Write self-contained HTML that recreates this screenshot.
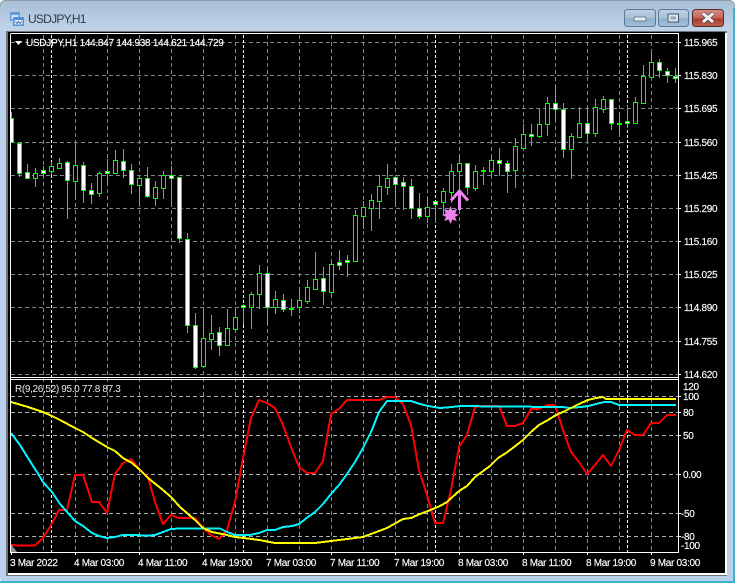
<!DOCTYPE html>
<html><head><meta charset="utf-8"><title>USDJPY,H1</title>
<style>
html,body{margin:0;padding:0;width:736px;height:583px;overflow:hidden;background:#fff}
svg{display:block}
text{font-family:"Liberation Sans",sans-serif;font-size:10px;fill:#fff;stroke:#fff;stroke-width:.15px;letter-spacing:-.3px}
</style></head><body>
<svg width="736" height="583" viewBox="0 0 736 583" xmlns="http://www.w3.org/2000/svg">
<defs>
<linearGradient id="tb" x1="0" y1="0" x2="0" y2="1"><stop offset="0" stop-color="#a9bfd5"/><stop offset="1" stop-color="#c0d5ea"/></linearGradient>
<linearGradient id="bt" x1="0" y1="0" x2="0" y2="1"><stop offset="0" stop-color="#bcd0e4"/><stop offset=".5" stop-color="#a9c2da"/><stop offset=".55" stop-color="#8fafcd"/><stop offset="1" stop-color="#a3c0da"/></linearGradient>
<linearGradient id="cl" x1="0" y1="0" x2="0" y2="1"><stop offset="0" stop-color="#d58f85"/><stop offset=".5" stop-color="#c2655a"/><stop offset=".55" stop-color="#aa3a2d"/><stop offset="1" stop-color="#bd6558"/></linearGradient>
</defs>
<!-- window chrome -->
<rect x="0" y="0" width="735" height="583" rx="6" fill="#b9d1ea"/>
<rect x="0" y="0" width="735" height="32" rx="6" fill="url(#tb)"/>
<path d="M0 7Q0 .5 6 .5H729Q734.5 .5 734.5 7" fill="none" stroke="#8d9dab"/>
<rect x="733" y="8" width="2" height="575" fill="#3fb4c9"/>
<rect x="0" y="581" width="735" height="2" fill="#3fb4c9"/>
<rect x="6" y="31" width="721" height="545" fill="#6e7479"/>
<rect x="8" y="32" width="717" height="541" fill="#000"/>
<rect x="8" y="573" width="719" height="2" fill="#fff"/>
<rect x="725" y="33" width="2" height="542" fill="#fff"/>
<!-- app icon -->
<rect x="10" y="12" width="10" height="9" rx="1" fill="#5f9ade"/><rect x="11.5" y="15" width="7" height="4.5" fill="#dbe9f8"/>
<rect x="13" y="17" width="11" height="9" rx="1" fill="#4f8fd8"/><rect x="14.5" y="20" width="8" height="4.5" fill="#e6f0fb"/>
<path d="M15.5 21.5l1.5 2 1.5-2 1.5 2 1.5-2" fill="none" stroke="#3a74bb"/>
<text x="28" y="23" style="font-size:12px;fill:#2d3a46;stroke:none;letter-spacing:-.75px">USDJPY,H1</text>
<!-- window buttons -->
<rect x="624.5" y="9.5" width="31" height="17" rx="3" fill="url(#bt)" stroke="#5e7a95"/>
<rect x="634" y="17" width="12" height="4" rx="1" fill="#e9eef2" stroke="#4f6273" stroke-width=".8"/>
<rect x="658.5" y="9.5" width="30" height="17" rx="3" fill="url(#bt)" stroke="#5e7a95"/>
<rect x="668" y="14" width="10.500" height="8" fill="#dfe6ec" stroke="#45586a"/><rect x="670.500" y="16.500" width="5.500" height="3" fill="#8fa8bf"/>
<rect x="692.5" y="9.5" width="31" height="17" rx="3" fill="url(#cl)" stroke="#5a2a28"/>
<path d="M703 13.500L713 22M713 13.500L703 22" stroke="#4b4b4b" stroke-width="4.500"/>
<path d="M703 13.500L713 22M713 13.500L703 22" stroke="#f4f4f4" stroke-width="3"/>
<!-- vertical grid -->
<path d="M43.5 35V552M75.5 35V552M107.500 35V552M139.500 35V552M171.500 35V552M203.500 35V552M235.500 35V552M267.500 35V552M299.500 35V552M331.500 35V552M363.500 35V552M395.500 35V552M427.500 35V552M459.500 35V552M491.500 35V552M523.500 35V552M555.500 35V552M587.500 35V552M619.500 35V552M651.500 35V552" stroke="#778899" stroke-dasharray="4 3" fill="none"/>
<!-- horizontal grid -->
<path d="M11 42.500H678M11 75.500H678M11 108.500H678M11 142.500H678M11 175.500H678M11 208.500H678M11 241.500H678M11 274.500H678M11 307.500H678M11 341.500H678M11 374.500H678" stroke="#778899" stroke-dasharray="4 3" fill="none"/>
<path d="M11 396.500H678M11 412.500H678M11 435.500H678M11 474.500H678M11 513.500H678M11 536.500H678" stroke="#a9b0b8" stroke-dasharray="4 3" fill="none"/>
<!-- day separators -->
<path d="M51.500 35V552M243.500 35V552M435.500 35V552M627.500 35V552" stroke="#fff" stroke-dasharray="3 2" fill="none"/>
<!-- wicks -->
<path shape-rendering="crispEdges" fill="none" stroke="#00ff00" d="M11.500 112V143M19.500 143V177M27.500 164V179M35.500 168V187M43.500 166V176M51.500 162V175M59.500 158V169M67.500 161V219M75.500 143V199M83.500 162V203M91.500 183V204M99.500 172V197M107.500 159V182M115.500 150V174M123.500 149V178M131.500 164V194M139.500 177V205M147.500 167V198M155.500 181V206M163.500 171V199M171.500 166V207M179.500 177V243M187.500 233V333M195.500 313V369M203.500 307V368M211.500 315V350M219.500 327V356M227.500 309V345M235.500 310V331M243.500 304V325M251.500 292V329M259.500 265V309M267.500 269V325M275.500 291V314M283.500 294V312M291.500 299V316M299.500 287V313M307.500 280V304M315.500 252V289M323.500 267V305M331.500 261V296M339.500 250V270M347.500 255V277M355.500 210V261M363.500 201V229M371.500 194V231M379.500 175V219M387.500 164V195M395.500 177V207M403.500 177V210M411.500 179V219M419.500 193V219M427.500 198V223M435.500 201V223M443.500 188V215M451.500 164V203M459.500 154V190M467.500 163V195M475.500 165V191M483.500 167V185M491.500 157V177M499.500 148V176M507.500 161V193M515.500 138V188M523.500 124V148M531.500 124V146M539.500 108V138M547.500 97V136M555.500 86V121M563.500 103V158M571.500 133V179M579.500 107V137M587.500 107V141M595.500 99V137M603.500 96V113M611.500 99V130M619.500 112V133M627.500 105V128M635.500 97V123M643.500 65V103M651.500 52V77M659.500 59V78M667.500 68V83M675.500 68V83"/>
<!-- white bodies -->
<path shape-rendering="crispEdges" fill="#fff" stroke="#00ff00" d="M17.500 143.500h4V173.500h-4zM25.500 172.500h4V178.500h-4zM41.500 170.500h4V173.500h-4zM65.500 162.500h4V180.500h-4zM81.500 165.500h4V190.500h-4zM89.500 190.500h4V194.500h-4zM105.500 171.500h4V173.500h-4zM121.500 161.500h4V170.500h-4zM129.500 170.500h4V184.500h-4zM145.500 178.500h4V196.500h-4zM169.500 175.500h4V178.500h-4zM177.500 177.500h4V238.500h-4zM185.500 239.500h4V325.500h-4zM193.500 325.500h4V367.500h-4zM217.500 332.500h4V345.500h-4zM241.500 305.500h4V307.500h-4zM265.500 273.500h4V307.500h-4zM281.500 300.500h4V309.500h-4zM289.500 308.500h4V309.500h-4zM321.500 278.500h4V291.500h-4zM337.500 262.500h4V265.500h-4zM345.500 260.500h4V262.500h-4zM393.500 177.500h4V184.500h-4zM401.500 182.500h4V186.500h-4zM409.500 186.500h4V208.500h-4zM417.500 208.500h4V216.500h-4zM433.500 201.500h4V204.500h-4zM465.500 163.500h4V187.500h-4zM481.500 170.500h4V171.500h-4zM497.500 160.500h4V163.500h-4zM505.500 163.500h4V171.500h-4zM529.500 134.500h4V136.500h-4zM553.500 103.500h4V109.500h-4zM561.500 109.500h4V149.500h-4zM585.500 123.500h4V133.500h-4zM609.500 99.500h4V123.500h-4zM617.500 123.500h4V124.500h-4zM625.500 121.500h4V123.500h-4zM657.500 62.500h4V70.500h-4zM665.500 71.500h4V75.500h-4zM673.500 76.500h4V78.500h-4z"/>
<path shape-rendering="crispEdges" fill="#fff" stroke="#00ff00" d="M11 118.500H13.500V142.500H11"/>
<!-- hollow bodies -->
<path shape-rendering="crispEdges" fill="#000" stroke="#00ff00" d="M33.500 173.500h4V178.500h-4zM49.500 166.500h4V171.500h-4zM57.500 163.500h4V168.500h-4zM73.500 165.500h4V181.500h-4zM97.500 173.500h4V193.500h-4zM113.500 160.500h4V173.500h-4zM137.500 178.500h4V185.500h-4zM153.500 187.500h4V198.500h-4zM161.500 175.500h4V188.500h-4zM201.500 338.500h4V366.500h-4zM209.500 333.500h4V339.500h-4zM225.500 328.500h4V345.500h-4zM233.500 317.500h4V329.500h-4zM249.500 294.500h4V307.500h-4zM257.500 273.500h4V294.500h-4zM273.500 299.500h4V307.500h-4zM297.500 300.500h4V307.500h-4zM305.500 287.500h4V301.500h-4zM313.500 279.500h4V289.500h-4zM329.500 264.500h4V292.500h-4zM353.500 215.500h4V261.500h-4zM361.500 207.500h4V216.500h-4zM369.500 200.500h4V208.500h-4zM377.500 186.500h4V201.500h-4zM385.500 178.500h4V187.500h-4zM425.500 207.500h4V216.500h-4zM441.500 191.500h4V202.500h-4zM449.500 171.500h4V192.500h-4zM457.500 163.500h4V171.500h-4zM473.500 171.500h4V188.500h-4zM489.500 160.500h4V171.500h-4zM513.500 146.500h4V170.500h-4zM521.500 134.500h4V148.500h-4zM537.500 124.500h4V136.500h-4zM545.500 103.500h4V124.500h-4zM569.500 136.500h4V149.500h-4zM577.500 123.500h4V137.500h-4zM593.500 107.500h4V133.500h-4zM601.500 99.500h4V109.500h-4zM633.500 102.500h4V123.500h-4zM641.500 76.500h4V103.500h-4zM649.500 62.500h4V77.500h-4z"/>
<!-- arrow and star -->
<path d="M459.500 210V191M451 200.500L459.500 191L468 200.500" fill="none" stroke="#ee82ee" stroke-width="3"/>
<path d="M450.500 206l1.800 4.400 4.700-1.400-1.800 4.500 3.800 1.500-4 1.700 1.800 4.300-4.500-1.500-1.800 4.500-1.800-4.500-4.500 1.500 1.800-4.300-4-1.700 3.800-1.500-1.800-4.500 4.700 1.400z" fill="#ee82ee"/>
<!-- indicator lines -->
<polyline shape-rendering="crispEdges" fill="none" stroke="#ff0000" stroke-width="2" stroke-linejoin="round" points="11,545 19,545.500 35,545.500 43,538 50,527 59,510 67,510 75,475 83,475 92,502 99,502 107,513 115,474 123,463 131,459 140,470 148,477 155,502 163,524 171,515 179,518 195,518 203,528 211,535 219,539 227,530 235,502 243,458 251,418 259,400 267,403 275,408 283,425 291,447 299,467 307,473 315,473 323,461 331,414 339,409 347,400 379,400 387,397 395,397 403,404 411,425 419,470 427,495 435,523 443,523 451,490 459,447 467,435 475,407 483,406 499,406 507,426 515,426 523,423 531,409 539,409 547,405 555,405 563,430 571,452 579,462 587,474 595,465 603,455 611,466 619,450 627,430 635,435 643,435 651,423 659,423 667,415 676,415"/>
<polyline shape-rendering="crispEdges" fill="none" stroke="#00f6ff" stroke-width="2" stroke-linejoin="round" points="11,433 20,445 28,458 37,472 43,482 52,492 60,504 68,513 75,521 83,526 92,533 99,536 107,538 115,537 123,535 132,535 148,535.500 155,535 163,532 171,529 180,528.500 220,528.500 227,532 235,535 250,535 259,533 267,530 275,530 283,527 292,526 299,524 308,517 315,512 323,504 331,494 339,485 347,474 355,462 363,448 371,432 379,412 387,401 411,401 420,404 428,406 440,408 452,407 460,406 499,406.500 563,407 569,408 581,407 588,406 596,404 604,402 611,402 619,405 676,405"/>
<polyline shape-rendering="crispEdges" fill="none" stroke="#ffff00" stroke-width="2" stroke-linejoin="round" points="11,402 28,407 43,412 52,416 60,420 75,428 83,432 92,438 107,447 115,451 123,458 132,463 140,470 148,478 163,490 171,497 180,507 195,520 203,528 212,532 227,535 235,537 252,539 259,540 275,543 315,543 331,541 347,539 363,537 371,534 379,531 387,528 403,519 411,518 420,514 428,511 440,506 447,502 459,491 467,486 475,477 490,466 498,458 506,453 514,447 523,440 531,432 539,425 548,420 556,415 563,412 571,408 579,404 588,400 596,398 603,397 606,399 676,399"/>
<path d="M11 544L17 552H11z" fill="#8a8f94"/>
<!-- frames -->
<path d="M10.500 34V552.500H678.500V33.500H10.500M10.500 377.500H678.500M10.500 379.500H678.500" fill="none" stroke="#fff" shape-rendering="crispEdges"/>
<path d="M678 42.500h3M678 75.500h3M678 108.500h3M678 142.500h3M678 175.500h3M678 208.500h3M678 241.500h3M678 274.500h3M678 307.500h3M678 341.500h3M678 374.500h3M678 396.500h3M678 412.500h3M678 435.500h3M678 474.500h3M678 513.500h3M678 536.500h3M11.500 552v3M75.500 552v3M139.500 552v3M203.500 552v3M267.500 552v3M331.500 552v3M395.500 552v3M459.500 552v3M523.500 552v3M587.500 552v3M651.500 552v3" stroke="#fff" fill="none"/>
<path d="M15 41h7l-3.500 4z" fill="#fff"/>
<text x="26" y="46" style="letter-spacing:-.29px">USDJPY,H1 144.847 144.938 144.621 144.729</text>
<text x="15" y="392" style="fill:#e8ecef;stroke:none;letter-spacing:-.34px">R(9,26,52) 95.0 77.8 87.3</text>
<!-- price labels -->
<text x="684" y="46">115.965</text>
<text x="684" y="79">115.830</text>
<text x="684" y="112">115.695</text>
<text x="684" y="146">115.560</text>
<text x="684" y="179">115.425</text>
<text x="684" y="212">115.290</text>
<text x="684" y="245">115.160</text>
<text x="684" y="278">115.025</text>
<text x="684" y="311">114.890</text>
<text x="684" y="345">114.755</text>
<text x="684" y="378">114.620</text>
<text x="683" y="390">120</text>
<text x="683" y="400">100</text>
<text x="683" y="416">80</text>
<text x="683" y="439">50</text>
<text x="683" y="478">0.00</text>
<text x="681" y="517">-50</text>
<text x="681" y="540">-80</text>
<text x="681" y="549">-100</text>
<!-- time labels -->
<text x="10" y="566">3 Mar 2022</text>
<text x="74" y="566">4 Mar 03:00</text>
<text x="138" y="566">4 Mar 11:00</text>
<text x="202" y="566">4 Mar 19:00</text>
<text x="266" y="566">7 Mar 03:00</text>
<text x="330" y="566">7 Mar 11:00</text>
<text x="394" y="566">7 Mar 19:00</text>
<text x="458" y="566">8 Mar 03:00</text>
<text x="522" y="566">8 Mar 11:00</text>
<text x="586" y="566">8 Mar 19:00</text>
<text x="650" y="566">9 Mar 03:00</text>
</svg>
</body></html>
